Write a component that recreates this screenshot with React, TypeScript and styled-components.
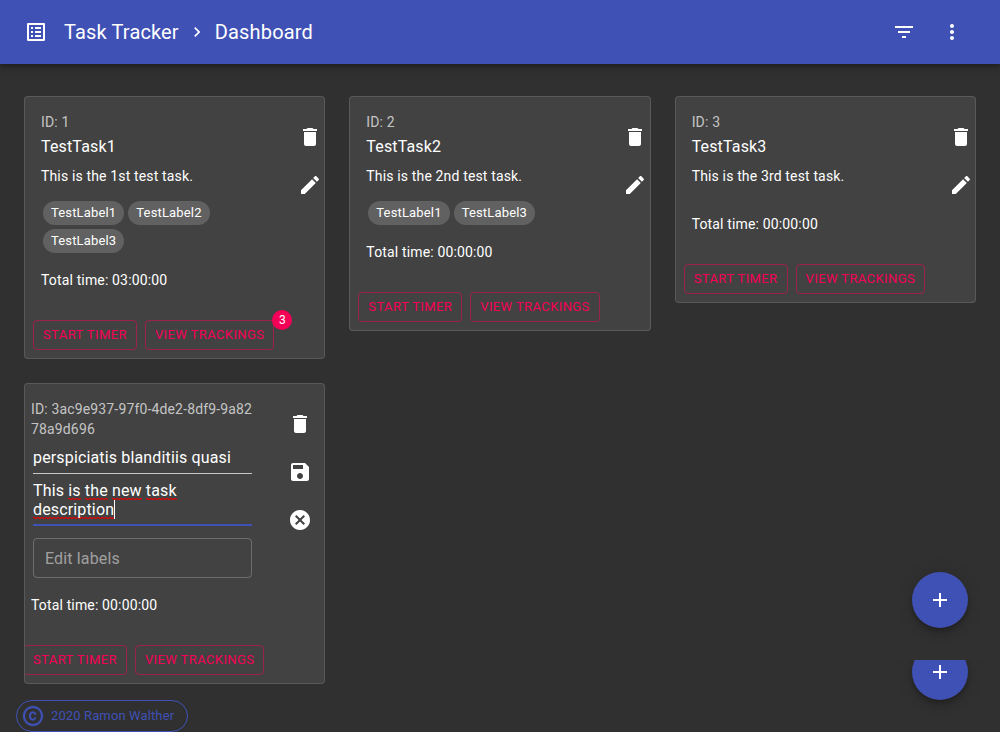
import React from "react";
import styled, { createGlobalStyle, css } from "styled-components";

const GlobalStyle = createGlobalStyle`
  *, *::before, *::after { box-sizing: border-box; }
  html, body { height: 100%; }
  body {
    margin: 0;
    overflow: hidden;
    background: #303030;
    color: #fff;
    font-family: Roboto, "Liberation Sans", sans-serif;
    font-size: 14px;
    line-height: 20px;
    letter-spacing: 0.01071em;
  }
  #root { height: 100%; }
`;

const paths = {
  list: "M19 5v14H5V5h14m1.1-2H3.9c-.5 0-.9.4-.9.9v16.2c0 .4.4.9.9.9h16.2c.4 0 .9-.5.9-.9V3.9c0-.5-.5-.9-.9-.9zM11 7h6v2h-6V7zm0 4h6v2h-6v-2zm0 4h6v2h-6zM7 7h2v2H7zm0 4h2v2H7zm0 4h2v2H7z",
  next: "M10 6L8.59 7.41 13.17 12l-4.58 4.59L10 18l6-6z",
  filter: "M10 18h4v-2h-4v2zM3 6v2h18V6H3zm3 7h12v-2H6v2z",
  more: "M12 8c1.1 0 2-.9 2-2s-.9-2-2-2-2 .9-2 2 .9 2 2 2zm0 2c-1.1 0-2 .9-2 2s.9 2 2 2 2-.9 2-2-.9-2-2-2zm0 6c-1.1 0-2 .9-2 2s.9 2 2 2 2-.9 2-2-.9-2-2-2z",
  trash: "M6 19c0 1.1.9 2 2 2h8c1.1 0 2-.9 2-2V7H6v12zM19 4h-3.5l-1-1h-5l-1 1H5v2h14V4z",
  edit: "M3 17.25V21h3.75L17.81 9.94l-3.75-3.75L3 17.25zM20.71 7.04c.39-.39.39-1.02 0-1.41l-2.34-2.34c-.39-.39-1.02-.39-1.41 0l-1.83 1.83 3.75 3.75 1.83-1.83z",
  save: "M17 3H5c-1.11 0-2 .9-2 2v14c0 1.1.89 2 2 2h14c1.1 0 2-.9 2-2V7l-4-4zm-5 16c-1.66 0-3-1.34-3-3s1.34-3 3-3 3 1.34 3 3-1.34 3-3 3zm3-10H5V5h10v4z",
  cancel: "M12 2C6.47 2 2 6.47 2 12s4.47 10 10 10 10-4.47 10-10S17.53 2 12 2zm5 13.59L15.59 17 12 13.41 8.41 17 7 15.59 10.59 12 7 8.41 8.41 7 12 10.59 15.59 7 17 8.41 13.41 12 17 15.59z",
  copyright: "M10.08 10.86c.05-.33.16-.62.3-.87s.34-.46.59-.62c.24-.15.54-.22.91-.23.23.01.44.05.63.13.2.09.38.21.52.36s.25.33.34.53.13.42.14.64h1.79c-.02-.47-.11-.9-.28-1.29s-.4-.73-.7-1.01-.66-.5-1.08-.66-.88-.23-1.39-.23c-.65 0-1.22.11-1.7.34s-.88.53-1.2.92-.56.84-.71 1.36S8 11.29 8 11.87v.27c0 .58.08 1.12.23 1.64s.39.97.71 1.35.72.69 1.2.91 1.05.34 1.7.34c.47 0 .91-.08 1.32-.23s.77-.36 1.08-.63.56-.58.74-.94.29-.74.3-1.15h-1.79c-.01.21-.06.4-.15.58s-.21.33-.36.46-.32.23-.52.3c-.19.07-.39.09-.6.1-.36-.01-.66-.08-.89-.23-.25-.16-.45-.37-.59-.62s-.25-.55-.3-.88-.08-.67-.08-1v-.27c0-.35.03-.68.08-1.01zM12 2C6.48 2 2 6.48 2 12s4.48 10 10 10 10-4.48 10-10S17.52 2 12 2zm0 18c-4.41 0-8-3.59-8-8s3.59-8 8-8 8 3.59 8 8-3.59 8-8 8z",
  add: "M19 13h-6v6h-2v-6H5v-2h6V5h2v6h6v2z",
};

const Svg = styled.svg<{ $size: number; $stroke: number }>`
  display: block;
  flex: none;
  width: ${(p) => p.$size}px;
  height: ${(p) => p.$size}px;
  fill: currentColor;
  stroke: currentColor;
  stroke-width: ${(p) => p.$stroke};
`;

const Icon = ({ name, size = 24, stroke = 0 }: { name: keyof typeof paths; size?: number; stroke?: number }) => (
  <Svg $size={size} $stroke={stroke} viewBox="0 0 24 24" aria-hidden="true">
    <path d={paths[name]} />
  </Svg>
);

const Page = styled.div`
  display: flex;
  flex-direction: column;
  height: 100%;
`;

const AppBar = styled.header`
  position: relative;
  display: flex;
  align-items: center;
  flex: none;
  height: 64px;
  padding: 0 24px;
  background: #3f51b5;
  box-shadow: 0 2px 4px -1px rgba(0, 0, 0, 0.2), 0 4px 5px 0 rgba(0, 0, 0, 0.14), 0 1px 10px 0 rgba(0, 0, 0, 0.12);
`;

const Breadcrumbs = styled.nav`
  display: flex;
  align-items: center;
  flex: 1;
  margin-left: 16px;
`;

const Crumb = styled.h6`
  margin: 0;
  font-size: 20px;
  font-weight: 400;
  line-height: 32px;
  letter-spacing: 0.0075em;
`;

const Separator = styled.span`
  display: flex;
  margin: 0 8px;
`;

const IconButton = styled.button`
  display: flex;
  align-items: center;
  justify-content: center;
  flex: none;
  width: 48px;
  height: 48px;
  padding: 0;
  border: 0;
  background: none;
  color: inherit;
`;

const BarIcon = styled.span`
  display: flex;
`;

const BarActions = styled.div`
  display: flex;
`;

const Board = styled.main`
  display: grid;
  grid-template-columns: repeat(3, 1fr);
  align-items: start;
  gap: 24px;
  padding: 32px 24px 16px;
`;

const Card = styled.article`
  border: 1px solid rgba(255, 255, 255, 0.12);
  border-radius: 4px;
  background: #424242;
  overflow: hidden;
`;

const CardBody = styled.div<{ $editing?: boolean }>`
  display: flex;
  justify-content: space-between;
  padding: 16px ${(p) => (p.$editing ? "0 0 6px" : "0 0 16px")};
`;

const Details = styled.div<{ $editing?: boolean }>`
  width: ${(p) => (p.$editing ? "223px" : "228px")};
  margin-top: -1px;
`;

const Tools = styled.div<{ $editing?: boolean }>`
  display: flex;
  flex-direction: column;
  flex: none;
  margin-right: ${(p) => (p.$editing ? "0" : "-9.7px")};
`;

const TaskId = styled.div`
  color: rgba(255, 255, 255, 0.7);
  word-break: break-all;
`;

const TaskName = styled.div`
  margin-top: 3px;
  font-size: 16px;
  line-height: 24px;
  letter-spacing: 0.00938em;
`;

const Description = styled.p`
  margin: 7px 0 13px;
`;

const Labels = styled.div`
  display: flex;
  flex-wrap: wrap;
  width: 200px;
`;

const Label = styled.span`
  height: 24px;
  margin: 2px;
  padding: 0 8px;
  border-radius: 12px;
  background: #616161;
  font-size: 13px;
  line-height: 24px;
  letter-spacing: 0.16px;
`;

const TotalTime = styled.div`
  margin-top: 15px;
`;

const CardActions = styled.div<{ $editing?: boolean }>`
  display: flex;
  gap: 8px;
  padding: 30px 8px 8px;
  margin-left: ${(p) => (p.$editing ? "-10px" : "0")};
`;

const ActionButton = styled.button`
  position: relative;
  height: 30px;
  padding: 0 9px;
  border: 1px solid rgba(245, 0, 87, 0.5);
  border-radius: 4px;
  background: none;
  color: #f50057;
  font: 400 13px/22px Roboto, "Liberation Sans", sans-serif;
  letter-spacing: 0.4px;
  text-transform: uppercase;
  white-space: nowrap;
`;

const Badge = styled.span`
  position: absolute;
  top: -11px;
  right: -19px;
  width: 20px;
  height: 20px;
  border-radius: 10px;
  background: #f50057;
  color: #fff;
  font-size: 12px;
  line-height: 20px;
  letter-spacing: 0;
  text-align: center;
`;

const Field = styled.div<{ $focused?: boolean }>`
  margin: 0 2px;
  font-size: 16px;
  line-height: 19px;
  letter-spacing: 0.00938em;
  ${(p) =>
    p.$focused
      ? css`
          padding: 7px 0 5px;
          border-bottom: 2px solid #3f51b5;
        `
      : css`
          padding: 9px 0 6px;
          border-bottom: 1px solid rgba(255, 255, 255, 0.7);
        `}
`;

const Misspelled = styled.span`
  background-image: linear-gradient(90deg, #e60000 50%, rgba(230, 0, 0, 0.3) 50%),
    linear-gradient(90deg, rgba(230, 0, 0, 0.3) 50%, #e60000 50%);
  background-position: 0 calc(100% - 1px), 0 100%;
  background-repeat: repeat-x;
  background-size: 4px 1px;
`;

const Caret = styled.span`
  display: inline-block;
  width: 1px;
  height: 19px;
  margin-right: -1px;
  background: #fff;
  vertical-align: top;
`;

const LabelSelect = styled.div`
  height: 40px;
  margin: 12px 2px 17px;
  padding: 0 11px;
  border: 1px solid rgba(255, 255, 255, 0.23);
  border-radius: 4px;
  color: rgba(255, 255, 255, 0.5);
  font-size: 16px;
  line-height: 40px;
  letter-spacing: 0.00938em;
`;

const Fab = styled.button`
  display: flex;
  align-items: center;
  justify-content: center;
  width: 56px;
  height: 56px;
  padding: 0;
  border: 0;
  border-radius: 50%;
  background: #3f51b5;
  color: #fff;
  box-shadow: 0 3px 5px -1px rgba(0, 0, 0, 0.2), 0 6px 10px 0 rgba(0, 0, 0, 0.14), 0 1px 18px 0 rgba(0, 0, 0, 0.12);
`;

const FloatingAdd = styled.div<{ $bottom: number; $cut?: boolean }>`
  position: fixed;
  right: 32px;
  bottom: ${(p) => p.$bottom}px;
  ${(p) => p.$cut && "clip-path: inset(16px -32px -32px -32px);"}
`;

const Footer = styled.footer`
  display: flex;
  padding: 0 16px;
`;

const Copyright = styled.div`
  display: flex;
  align-items: center;
  height: 32px;
  padding: 0 13px 0 4px;
  border: 1px solid #3f51b5;
  border-radius: 16px;
  color: #3f51b5;
  font-size: 13px;
  letter-spacing: 0.12px;
`;

const CopyrightText = styled.span`
  margin-left: 6px;
`;

interface Task {
  id: string;
  name: string;
  description: string;
  labels: string[];
  total: string;
  trackings?: number;
}

const tasks: Task[] = [
  { id: "1", name: "TestTask1", description: "This is the 1st test task.", labels: ["TestLabel1", "TestLabel2", "TestLabel3"], total: "03:00:00", trackings: 3 },
  { id: "2", name: "TestTask2", description: "This is the 2nd test task.", labels: ["TestLabel1", "TestLabel3"], total: "00:00:00" },
  { id: "3", name: "TestTask3", description: "This is the 3rd test task.", labels: [], total: "00:00:00" },
];

const Actions = ({ editing, count }: { editing?: boolean; count?: number }) => (
  <CardActions $editing={editing}>
    <ActionButton>Start Timer</ActionButton>
    <ActionButton>
      View Trackings
      {count ? <Badge>{count}</Badge> : null}
    </ActionButton>
  </CardActions>
);

const TaskCard = ({ task }: { task: Task }) => (
  <Card>
    <CardBody>
      <Details>
        <TaskId>ID: {task.id}</TaskId>
        <TaskName>{task.name}</TaskName>
        <Description>{task.description}</Description>
        <Labels>
          {task.labels.map((l) => (
            <Label key={l}>{l}</Label>
          ))}
        </Labels>
        <TotalTime>Total time: {task.total}</TotalTime>
      </Details>
      <Tools>
        <IconButton aria-label="Delete"><Icon name="trash" /></IconButton>
        <IconButton aria-label="Edit"><Icon name="edit" /></IconButton>
      </Tools>
    </CardBody>
    <Actions count={task.trackings} />
  </Card>
);

const EditCard = () => (
  <Card>
    <CardBody $editing>
      <Details $editing>
        <TaskId>ID: 3ac9e937-97f0-4de2-8df9-9a8278a9d696</TaskId>
        <Field>perspiciatis blanditiis quasi</Field>
        <Field $focused>
          This <Misspelled>is</Misspelled> <Misspelled>the</Misspelled> <Misspelled>new</Misspelled>{" "}
          <Misspelled>task</Misspelled>
          <br />
          <Misspelled>description</Misspelled>
          <Caret />
        </Field>
        <LabelSelect>Edit labels</LabelSelect>
        <TotalTime>Total time: 00:00:00</TotalTime>
      </Details>
      <Tools $editing>
        <IconButton aria-label="Delete"><Icon name="trash" /></IconButton>
        <IconButton aria-label="Save"><Icon name="save" /></IconButton>
        <IconButton aria-label="Cancel"><Icon name="cancel" /></IconButton>
      </Tools>
    </CardBody>
    <Actions editing />
  </Card>
);

export default function App() {
  return (
    <Page>
      <GlobalStyle />
      <AppBar>
        <BarIcon><Icon name="list" /></BarIcon>
        <Breadcrumbs>
          <Crumb>Task Tracker</Crumb>
          <Separator><Icon name="next" size={20} /></Separator>
          <Crumb>Dashboard</Crumb>
        </Breadcrumbs>
        <BarActions>
          <IconButton aria-label="Filter"><Icon name="filter" /></IconButton>
          <IconButton aria-label="More"><Icon name="more" /></IconButton>
        </BarActions>
      </AppBar>
      <Board>
        {tasks.map((t) => (
          <TaskCard key={t.id} task={t} />
        ))}
        <EditCard />
      </Board>
      <Footer>
        <Copyright>
          <Icon name="copyright" stroke={0.3} />
          <CopyrightText>2020 Ramon Walther</CopyrightText>
        </Copyright>
      </Footer>
      <FloatingAdd $bottom={104}>
        <Fab aria-label="Add task"><Icon name="add" /></Fab>
      </FloatingAdd>
      <FloatingAdd $bottom={32} $cut>
        <Fab aria-label="Add label"><Icon name="add" /></Fab>
      </FloatingAdd>
    </Page>
  );
}
